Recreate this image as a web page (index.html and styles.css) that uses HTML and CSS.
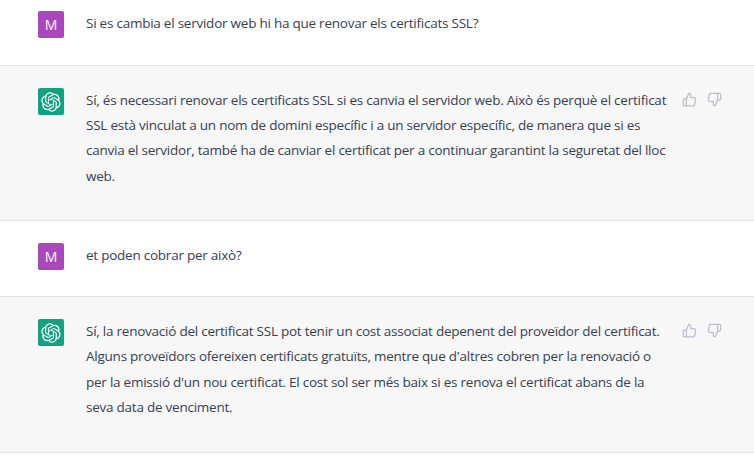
FILE: index.html
```html
<!DOCTYPE html>
<html lang="ca">
<head>
    <meta charset="UTF-8">
    <title>Certificats SSL</title>
    <link rel="stylesheet" href="styles.css">
</head>
<body>
    <svg class="defs" width="0" height="0">
        <symbol id="logo" viewBox="0 0 41 41">
            <path fill="currentColor" d="M37.5324 16.8707C37.9808 15.5241 38.1363 14.0974 37.9886 12.6859C37.8409 11.2744 37.3934 9.91076 36.676 8.68622C35.6126 6.83404 33.9882 5.3676 32.0373 4.4985C30.0864 3.62941 27.9098 3.40259 25.8215 3.85078C24.8796 2.7893 23.7219 1.94125 22.4257 1.36341C21.1295 0.785575 19.7249 0.491269 18.3058 0.500197C16.1708 0.495044 14.0893 1.16803 12.3614 2.42214C10.6335 3.67624 9.34853 5.44666 8.6917 7.47815C7.30085 7.76286 5.98686 8.3414 4.8377 9.17505C3.68854 10.0087 2.73073 11.0782 2.02839 12.312C0.956464 14.1591 0.498905 16.2988 0.721698 18.4228C0.944492 20.5467 1.83612 22.5449 3.268 24.1293C2.81966 25.4759 2.66413 26.9026 2.81182 28.3141C2.95951 29.7256 3.40701 31.0892 4.12437 32.3138C5.18791 34.1659 6.8123 35.6322 8.76321 36.5013C10.7141 37.3704 12.8907 37.5973 14.9789 37.1492C15.9208 38.2107 17.0786 39.0587 18.3747 39.6366C19.6709 40.2144 21.0755 40.5087 22.4946 40.4998C24.6307 40.5054 26.7133 39.8321 28.4418 38.5772C30.1704 37.3223 31.4556 35.5506 32.1119 33.5179C33.5027 33.2332 34.8167 32.6547 35.9659 31.821C37.115 30.9874 38.0728 29.9178 38.7752 28.684C39.8458 26.8371 40.3023 24.6979 40.0789 22.5748C39.8556 20.4517 38.9639 18.4544 37.5324 16.8707ZM22.4978 37.8849C20.7443 37.8874 19.0459 37.2733 17.6994 36.1501C17.7601 36.117 17.8666 36.0586 17.936 36.0161L25.9004 31.4156C26.1003 31.3019 26.2663 31.137 26.3813 30.9378C26.4964 30.7386 26.5563 30.5124 26.5549 30.2825V19.0542L29.9213 20.998C29.9389 21.0068 29.9541 21.0198 29.9656 21.0359C29.977 21.052 29.9842 21.0707 29.9867 21.0902V30.3889C29.9842 32.375 29.1946 34.2791 27.7909 35.6841C26.3872 37.0892 24.4838 37.8806 22.4978 37.8849ZM6.39227 31.0064C5.51397 29.4888 5.19742 27.7107 5.49804 25.9832C5.55718 26.0187 5.66048 26.0818 5.73461 26.1244L13.699 30.7248C13.8975 30.8408 14.1233 30.902 14.3532 30.902C14.583 30.902 14.8088 30.8408 15.0073 30.7248L24.731 25.1103V28.9979C24.7321 29.0177 24.7283 29.0376 24.7199 29.0556C24.7115 29.0736 24.6988 29.0893 24.6829 29.1012L16.6317 33.7497C14.9096 34.7416 12.8643 35.0097 10.9447 34.4954C9.02506 33.9811 7.38785 32.7263 6.39227 31.0064ZM4.29707 13.6194C5.17156 12.0998 6.55279 10.9364 8.19885 10.3327C8.19885 10.4013 8.19491 10.5228 8.19491 10.6071V19.808C8.19351 20.0378 8.25334 20.2638 8.36823 20.4629C8.48312 20.6619 8.64893 20.8267 8.84863 20.9404L18.5723 26.5542L15.206 28.4979C15.1894 28.5089 15.1703 28.5155 15.1505 28.5173C15.1307 28.5191 15.1107 28.516 15.0924 28.5082L7.04046 23.8557C5.32135 22.8601 4.06716 21.2235 3.55289 19.3046C3.03862 17.3858 3.30624 15.3413 4.29707 13.6194ZM31.955 20.0556L22.2312 14.4411L25.5976 12.4981C25.6142 12.4872 25.6333 12.4805 25.6531 12.4787C25.6729 12.4769 25.6928 12.4801 25.7111 12.4879L33.7631 17.1364C34.9967 17.849 36.0017 18.8982 36.6606 20.1613C37.3194 21.4244 37.6047 22.849 37.4832 24.2684C37.3617 25.6878 36.8382 27.0432 35.9743 28.1759C35.1103 29.3086 33.9415 30.1717 32.6047 30.6641C32.6047 30.5947 32.6047 30.4733 32.6047 30.3889V21.188C32.6066 20.9586 32.5474 20.7328 32.4332 20.5338C32.319 20.3348 32.154 20.1698 31.955 20.0556ZM35.3055 15.0128C35.2464 14.9765 35.1431 14.9142 35.069 14.8717L27.1045 10.2712C26.906 10.1554 26.6803 10.0943 26.4504 10.0943C26.2206 10.0943 25.9948 10.1554 25.7963 10.2712L16.0726 15.8858V11.9982C16.0715 11.9783 16.0753 11.9585 16.0837 11.9405C16.0921 11.9225 16.1048 11.9068 16.1207 11.8949L24.1719 7.25025C25.4053 6.53903 26.8158 6.19376 28.2383 6.25482C29.6608 6.31589 31.0364 6.78077 32.2044 7.59508C33.3723 8.40939 34.2842 9.53945 34.8334 10.8531C35.3826 12.1667 35.5464 13.6095 35.3055 15.0128ZM14.2424 21.9419L10.8752 19.9981C10.8576 19.9893 10.8423 19.9763 10.8309 19.9602C10.8195 19.9441 10.8122 19.9254 10.8098 19.9058V10.6071C10.8107 9.18295 11.2173 7.78848 11.9819 6.58696C12.7466 5.38544 13.8377 4.42659 15.1275 3.82264C16.4173 3.21869 17.8524 2.99464 19.2649 3.1767C20.6775 3.35876 22.0089 3.93941 23.1034 4.85067C23.0427 4.88379 22.937 4.94215 22.8668 4.98473L14.9024 9.58517C14.7025 9.69878 14.5366 9.86356 14.4215 10.0626C14.3065 10.2616 14.2466 10.4877 14.2479 10.7175L14.2424 21.9419ZM16.071 17.9991L20.4018 15.4978L24.7325 17.9975V22.9985L20.4018 25.4983L16.071 22.9985V17.9991Z"/>
        </symbol>
        <symbol id="up" viewBox="0 0 24 24">
            <path d="M14 9V5a3 3 0 0 0-3-3l-4 9v11h11.28a2 2 0 0 0 2-1.7l1.38-9a2 2 0 0 0-2-2.3zM7 22H4a2 2 0 0 1-2-2v-7a2 2 0 0 1 2-2h3"/>
        </symbol>
        <symbol id="down" viewBox="0 0 24 24">
            <path d="M10 15v4a3 3 0 0 0 3 3l4-9V2H5.72a2 2 0 0 0-2 1.7l-1.38 9a2 2 0 0 0 2 2.3zm7-13h2.67A2.31 2.31 0 0 1 22 4v7a2.31 2.31 0 0 1-2.33 2H17"/>
        </symbol>
    </svg>

    <div class="msg user first">
        <div class="avatar purple">M</div>
        <div class="text">Si es cambia el servidor web hi ha que renovar els certificats SSL?</div>
    </div>

    <div class="msg bot">
        <div class="avatar green"><svg class="logo"><use href="#logo"/></svg></div>
        <div class="text">Sí, és necessari renovar els certificats SSL si es canvia el servidor web. Això és perquè el certificat SSL està vinculat a un nom de domini específic i a un servidor específic, de manera que si es canvia el servidor, també ha de canviar el certificat per a continuar garantint la seguretat del lloc web.</div>
        <div class="actions">
            <svg class="thumb"><use href="#up"/></svg>
            <svg class="thumb"><use href="#down"/></svg>
        </div>
    </div>

    <div class="msg user">
        <div class="avatar purple">M</div>
        <div class="text">et poden cobrar per això?</div>
    </div>

    <div class="msg bot last">
        <div class="avatar green"><svg class="logo"><use href="#logo"/></svg></div>
        <div class="text">Sí, la renovació del certificat SSL pot tenir un cost associat depenent del proveïdor del certificat. Alguns proveïdors ofereixen certificats gratuïts, mentre que d'altres cobren per la renovació o per la emissió d'un nou certificat. El cost sol ser més baix si es renova el certificat abans de la seva data de venciment.</div>
        <div class="actions">
            <svg class="thumb"><use href="#up"/></svg>
            <svg class="thumb"><use href="#down"/></svg>
        </div>
    </div>
</body>
</html>
```

FILE: styles.css
```css
body {
    margin: 0;
    background: #fff;
    color: #374151;
    font-family: "Open Sans", "Noto Sans", sans-serif;
    font-size: 13.5px;
    letter-spacing: -0.24px;
    line-height: 25.2px;
    overflow: hidden;
}

.defs {
    display: none;
}

.msg {
    display: flex;
    padding: 22px 32px 26px 38px;
    border-bottom: 1px solid #e3e3e5;
}

.first {
    padding-top: 11px;
    padding-bottom: 27px;
}

.bot {
    background: #f7f7f8;
    padding-bottom: 31.3px;
}

.last {
    padding-bottom: 32px;
}

.avatar {
    flex: none;
    width: 26px;
    height: 27px;
    margin-right: 22px;
    border-radius: 2px;
    color: #fff;
    display: flex;
    align-items: center;
    justify-content: center;
    font-size: 14px;
    font-weight: 500;
    letter-spacing: 0;
}

.purple {
    background: #ab47bc;
}

.green {
    background: #10a37f;
}

.logo {
    width: 20px;
    height: 20px;
    color: #fff;
}

.text {
    width: 585px;
}

.actions {
    display: flex;
    gap: 10px;
    margin-left: 11px;
    padding-top: 4px;
}

.thumb {
    width: 15px;
    height: 15px;
    fill: none;
    stroke: #bcbccb;
    stroke-width: 2;
    stroke-linecap: round;
    stroke-linejoin: round;
}
```
